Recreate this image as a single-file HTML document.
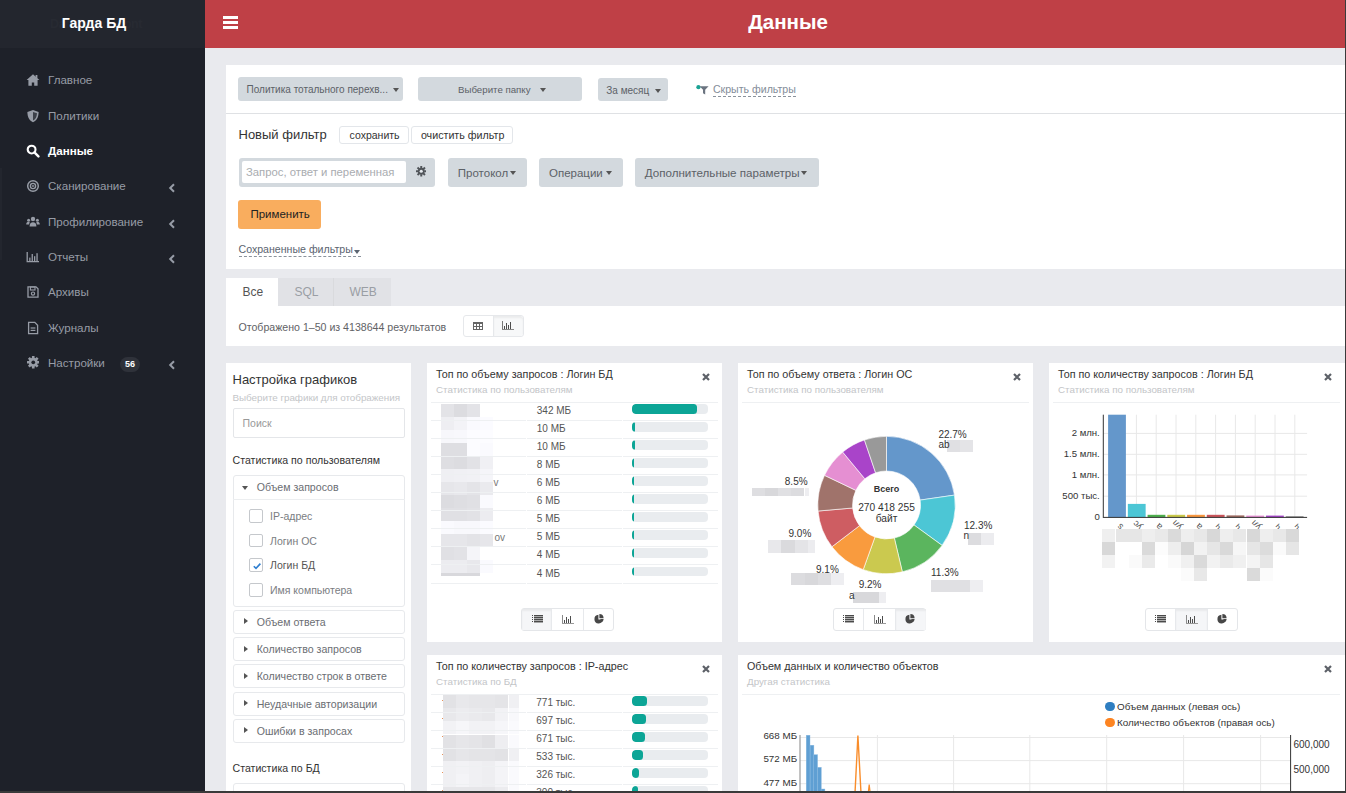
<!DOCTYPE html>
<html><head><meta charset="utf-8">
<style>
*{box-sizing:border-box;margin:0;padding:0}
html,body{width:1346px;height:793px;overflow:hidden;background:#e9eaee;font-family:"Liberation Sans",sans-serif;color:#333}
.abs{position:absolute}
#sb{left:0;top:0;width:205px;height:793px;background:#1e2129}
#logo{left:0;top:0;width:205px;height:48px;background:#23262e;color:#fff;font-weight:bold;font-size:14px;text-align:center;line-height:46px;padding-right:17px}
.nav{position:absolute;left:0;width:205px;height:20px;color:#979ca6;font-size:11.6px}
.nav .t{position:absolute;left:48px;top:0;line-height:20px}
.nav .ic{position:absolute}
.nav.act{color:#fff;font-weight:bold}
.chev{position:absolute;left:168px;top:7px;width:8px;height:10px}
#hdr{left:205px;top:0;width:1140px;height:48px;background:#bf4046}
#hdr .title{position:absolute;left:0;width:1166px;top:10px;text-align:center;color:#fff;font-weight:bold;font-size:20.5px}
#rb{left:1345px;top:0;width:1px;height:793px;background:#3a3a3a}
#bb{left:0;top:791px;width:1346px;height:2px;background:#3a3a3a}
.card{position:absolute;background:#fff}
.gbtn{position:absolute;background:#d3d9de;border-radius:3px;color:#5c6167;font-size:10px;height:24px;line-height:24px}
.caret{display:inline-block;width:0;height:0;border-left:3.5px solid transparent;border-right:3.5px solid transparent;border-top:4px solid #555;vertical-align:middle}
.gbtn .lbl,.wbtn .lbl{position:absolute;top:0;white-space:nowrap}
.gbtn .lbl{top:1px}
.gbtn .caret{position:absolute;top:10.5px}
.gbtn.big{font-size:11.5px;line-height:28.5px}
.gbtn.big .caret{top:12.5px}
.wbtn{position:absolute;background:#fff;border:1px solid #e3e6ea;border-radius:3px;color:#333;font-size:10.5px;line-height:16.5px}
.wbtn .lbl{left:8px}
.lnk{line-height:13px;border-bottom:1px dashed #8a929c;white-space:nowrap}
.acc{position:absolute;left:232.5px;width:172px;border:1px solid #e7e9ec;border-radius:3px;background:#fff}
.alb{left:256.7px;line-height:14px;font-size:10.6px;color:#6b6e73;white-space:nowrap}
.chk{left:249.2px;width:13.7px;height:13.7px;border:1px solid #c5c8cc;border-radius:2px;background:#fff}
.caretr{display:block;width:0;height:0;border-top:3.5px solid transparent;border-bottom:3.5px solid transparent;border-left:4px solid #555}
.ctitle{position:absolute;font-size:10.75px;line-height:13px;color:#333;white-space:nowrap}
.csub{position:absolute;font-size:9.8px;line-height:12px;color:#c3c5c8;white-space:nowrap}
.tval{position:absolute;font-size:10px;line-height:14px;color:#555;white-space:nowrap}
.track{position:absolute;width:75.7px;height:9.8px;border-radius:4px;background:#e9ecef;overflow:hidden}
.fill{height:100%;background:#0ca596;border-radius:3.5px}
.dlab{position:absolute;font-size:10px;line-height:12px;color:#333;white-space:nowrap}
.ylab{position:absolute;font-size:9.6px;line-height:12px;color:#333;text-align:right;white-space:nowrap}
</style></head><body>
<div id="sb" class="abs"></div>
<div id="logo" class="abs"><span style="position:absolute;left:50px;top:1px;color:#272a32;font-size:12.5px;letter-spacing:-0.5px">DataGuard Front</span><span style="position:relative">Гарда БД</span></div>
<div class="abs" style="left:0;top:168px;width:1.5px;height:92px;background:#23262e"></div>
<div class="nav" style="top:70.4px"><svg class="ic" style="left:26px;top:3px;color:#979ca6;fill:#979ca6" width="14" height="14" viewBox="0 0 14 14"><path d="M7 1.2 L13.4 7 L11.6 7 L11.6 12.8 L8.2 12.8 L8.2 9.4 L5.8 9.4 L5.8 12.8 L2.4 12.8 L2.4 7 L0.6 7 Z" /><rect x="9.6" y="2" width="1.8" height="3.4"/></svg><span class="t">Главное</span></div>
<div class="nav" style="top:105.7px"><svg class="ic" style="left:26px;top:3px;color:#979ca6;fill:#979ca6" width="14" height="14" viewBox="0 0 14 14"><path d="M7 1 L12.6 3 C12.6 8.5 10.5 11.6 7 13.2 C3.5 11.6 1.4 8.5 1.4 3 Z"/><path d="M7 2.9 L11 4.3 C10.8 8.2 9.4 10.4 7 11.5 Z" fill="#1e2129" opacity="0.75"/></svg><span class="t">Политики</span></div>
<div class="nav act" style="top:141.0px"><svg class="ic" style="left:26px;top:3px;color:#ffffff;fill:#ffffff" width="14" height="14" viewBox="0 0 14 14"><circle cx="5.6" cy="5.6" r="3.9" fill="none" stroke-width="2.1" stroke="currentColor"/><path d="M8.4 8.4 L12.4 12.4" stroke="currentColor" stroke-width="2.4" stroke-linecap="round"/></svg><span class="t">Данные</span></div>
<div class="nav" style="top:176.3px"><svg class="ic" style="left:26px;top:3px;color:#979ca6;fill:#979ca6" width="14" height="14" viewBox="0 0 14 14"><circle cx="7" cy="7" r="5.3" fill="none" stroke="currentColor" stroke-width="1.5"/><circle cx="7" cy="7" r="2.6" fill="none" stroke="currentColor" stroke-width="1.4"/><circle cx="7" cy="7" r="0.9"/></svg><span class="t">Сканирование</span><svg class="chev" width="8" height="10" viewBox="0 0 8 10"><path d="M6 1.2 L2.2 5 L6 8.8" fill="none" stroke="#979ca6" stroke-width="2"/></svg></div>
<div class="nav" style="top:211.6px"><svg class="ic" style="left:26px;top:3px;color:#979ca6;fill:#979ca6" width="14" height="14" viewBox="0 0 14 14"><circle cx="7" cy="4" r="2.2"/><path d="M3.6 11.6 C3.6 8.4 4.8 7.2 7 7.2 C9.2 7.2 10.4 8.4 10.4 11.6 Z"/><circle cx="2.6" cy="5.2" r="1.5"/><circle cx="11.4" cy="5.2" r="1.5"/><path d="M0.2 9.4 C0.2 7.6 1 7 2.6 7 C3.4 7 3.6 7.3 3.9 7.6 C3.4 8.2 3.1 8.8 3 9.4Z"/><path d="M13.8 9.4 C13.8 7.6 13 7 11.4 7 C10.6 7 10.4 7.3 10.1 7.6 C10.6 8.2 10.9 8.8 11 9.4Z"/></svg><span class="t">Профилирование</span><svg class="chev" width="8" height="10" viewBox="0 0 8 10"><path d="M6 1.2 L2.2 5 L6 8.8" fill="none" stroke="#979ca6" stroke-width="2"/></svg></div>
<div class="nav" style="top:246.9px"><svg class="ic" style="left:26px;top:3px;color:#979ca6;fill:#979ca6" width="14" height="14" viewBox="0 0 14 14"><path d="M1.2 2 L1.2 11.6 L13 11.6" fill="none" stroke="currentColor" stroke-width="1.3"/><rect x="3.2" y="7.6" width="1.3" height="3.4"/><rect x="5.6" y="4" width="1.3" height="7"/><rect x="8" y="6.2" width="1.3" height="4.8"/><rect x="10.4" y="3.2" width="1.3" height="7.8"/></svg><span class="t">Отчеты</span><svg class="chev" width="8" height="10" viewBox="0 0 8 10"><path d="M6 1.2 L2.2 5 L6 8.8" fill="none" stroke="#979ca6" stroke-width="2"/></svg></div>
<div class="nav" style="top:282.2px"><svg class="ic" style="left:26px;top:3px;color:#979ca6;fill:#979ca6" width="14" height="14" viewBox="0 0 14 14"><path d="M2 1.8 L10 1.8 L12 3.8 L12 12.2 L2 12.2 Z" fill="none" stroke="currentColor" stroke-width="1.3"/><rect x="4.4" y="2" width="4.6" height="3" fill="none" stroke="currentColor" stroke-width="1.1"/><circle cx="7" cy="8.6" r="1.6" fill="none" stroke="currentColor" stroke-width="1.2"/></svg><span class="t">Архивы</span></div>
<div class="nav" style="top:317.5px"><svg class="ic" style="left:26px;top:3px;color:#979ca6;fill:#979ca6" width="14" height="14" viewBox="0 0 14 14"><path d="M2.6 1.4 L8.8 1.4 L11.6 4.2 L11.6 12.6 L2.6 12.6 Z" fill="none" stroke="currentColor" stroke-width="1.3"/><rect x="4.6" y="6.4" width="4.8" height="1.2"/><rect x="4.6" y="8.8" width="4.8" height="1.2"/></svg><span class="t">Журналы</span></div>
<div class="nav" style="top:352.8px"><svg class="ic" style="left:26.5px;top:3.5px;color:#979ca6;fill:#979ca6" width="12.5" height="12.5" viewBox="0 0 14 14"><g transform="translate(7 7)"><rect x="-1.5" y="-7" width="3" height="3.2" rx="0.4" transform="rotate(0)"/><rect x="-1.5" y="-7" width="3" height="3.2" rx="0.4" transform="rotate(45)"/><rect x="-1.5" y="-7" width="3" height="3.2" rx="0.4" transform="rotate(90)"/><rect x="-1.5" y="-7" width="3" height="3.2" rx="0.4" transform="rotate(135)"/><rect x="-1.5" y="-7" width="3" height="3.2" rx="0.4" transform="rotate(180)"/><rect x="-1.5" y="-7" width="3" height="3.2" rx="0.4" transform="rotate(225)"/><rect x="-1.5" y="-7" width="3" height="3.2" rx="0.4" transform="rotate(270)"/><rect x="-1.5" y="-7" width="3" height="3.2" rx="0.4" transform="rotate(315)"/><circle r="5"/></g><circle cx="7" cy="7" r="2.1" fill="#1e2129"/></svg><span class="t">Настройки</span><svg class="chev" width="8" height="10" viewBox="0 0 8 10"><path d="M6 1.2 L2.2 5 L6 8.8" fill="none" stroke="#979ca6" stroke-width="2"/></svg><span style="position:absolute;left:120px;top:4px;width:20px;height:15px;border-radius:8px;background:#2f323a;color:#fff;font-weight:bold;font-size:9px;line-height:15px;text-align:center">56</span></div>

<div id="hdr" class="abs">
  <svg style="position:absolute;left:18px;top:16px" width="15" height="13" viewBox="0 0 15 13"><rect x="0" y="0" width="15" height="3" fill="#fff"/><rect x="0" y="5" width="15" height="3" fill="#fff"/><rect x="0" y="10" width="15" height="3" fill="#fff"/></svg>
  <div class="title">Данные</div>
</div>

<!-- filter card -->
<div class="card" style="left:226px;top:65px;width:1119px;height:204px"></div>


<!-- filter content -->
<div class="gbtn" style="left:238px;top:77px;width:165px;height:24px"><span class="lbl" style="left:8.6px">Политика тотального перехв...</span><i class="caret" style="left:155px"></i></div>
<div class="gbtn" style="left:418px;top:77px;width:164px;height:24px"><span class="lbl" style="left:40px;font-size:9.7px">Выберите папку</span><i class="caret" style="left:122px"></i></div>
<div class="gbtn" style="left:598px;top:78px;width:70px;height:23px"><span class="lbl" style="left:8.3px">За месяц</span><i class="caret" style="left:57px"></i></div>
<svg class="abs" style="left:696px;top:84.5px" width="14" height="10" viewBox="0 0 14 10"><circle cx="2.4" cy="2.2" r="2.1" fill="#1aa394"/><path d="M3.6 1.2 L12.6 1.2 L9.2 4.8 L9.2 9.4 L7 8.2 L7 4.8 Z" fill="#6b7480"/></svg>
<div class="abs lnk" style="left:712.9px;top:82.5px;font-size:10.6px;color:#848d99">Скрыть фильтры</div>
<div class="abs" style="left:226px;top:112.5px;width:1119px;height:1px;background:#dfe1e4"></div>

<div class="abs" style="left:238.5px;top:127px;font-size:13px;line-height:16px;color:#333">Новый фильтр</div>
<div class="wbtn" style="left:339px;top:125.5px;width:69.5px;height:18.5px"><span class="lbl" style="left:9.6px">сохранить</span></div>
<div class="wbtn" style="left:411px;top:125.5px;width:101.6px;height:18.5px"><span class="lbl" style="left:8.9px;font-size:10.7px">очистить фильтр</span></div>

<div class="gbtn" style="left:238.5px;top:158px;width:196.5px;height:28.5px"></div>
<div class="abs" style="left:242.3px;top:161px;width:163.7px;height:22.4px;background:#fff;border-radius:2px"></div>
<div class="abs" style="left:246px;top:161px;line-height:22.4px;font-size:11.3px;color:#a9acb0">Запрос, ответ и переменная</div>
<svg class="abs" style="left:415.5px;top:166px" width="10.5" height="10.5" viewBox="0 0 14 14"><g transform="translate(7 7)" fill="#505459"><rect x="-1.3" y="-7" width="2.6" height="3" transform="rotate(0)"/><rect x="-1.3" y="-7" width="2.6" height="3" transform="rotate(45)"/><rect x="-1.3" y="-7" width="2.6" height="3" transform="rotate(90)"/><rect x="-1.3" y="-7" width="2.6" height="3" transform="rotate(135)"/><rect x="-1.3" y="-7" width="2.6" height="3" transform="rotate(180)"/><rect x="-1.3" y="-7" width="2.6" height="3" transform="rotate(225)"/><rect x="-1.3" y="-7" width="2.6" height="3" transform="rotate(270)"/><rect x="-1.3" y="-7" width="2.6" height="3" transform="rotate(315)"/><circle r="4.6"/></g><circle cx="7" cy="7" r="2.1" fill="#e6eaee"/></svg>
<div class="gbtn big" style="left:448px;top:158px;width:79px;height:28.5px"><span class="lbl" style="left:9.8px">Протокол</span><i class="caret" style="left:62px"></i></div>
<div class="gbtn big" style="left:539px;top:158px;width:84px;height:28.5px"><span class="lbl" style="left:10px">Операции</span><i class="caret" style="left:67px"></i></div>
<div class="gbtn big" style="left:635px;top:158px;width:184px;height:28.5px"><span class="lbl" style="left:9.8px;font-size:11.6px">Дополнительные параметры</span><i class="caret" style="left:166px"></i></div>

<div class="abs" style="left:238px;top:199.5px;width:82.5px;height:29.3px;background:#f9ad5e;border-radius:3px"></div>
<div class="abs" style="left:250.4px;top:199.5px;line-height:29.3px;font-size:11.5px;color:#222">Применить</div>

<div class="abs lnk" style="left:238.5px;top:242.5px;font-size:10.6px;color:#5b6470;padding-right:8px">Сохраненные фильтры<i class="caret" style="position:absolute;left:115px;top:7px;border-top-color:#5b6470"></i></div>

<!-- tabs -->
<div class="abs" style="left:226px;top:278px;width:52px;height:28px;background:#fff"></div>
<div class="abs" style="left:278px;top:278px;width:55px;height:28px;background:#e1e2e6"></div>
<div class="abs" style="left:333px;top:278px;width:58px;height:28px;background:#e1e2e6;border-left:1px solid #d9dadd"></div>
<div class="card" style="left:226px;top:306px;width:1119px;height:40px"></div>
<div class="abs" style="left:242.5px;top:278px;line-height:28px;font-size:12px;color:#555">Все</div>
<div class="abs" style="left:294.5px;top:278px;line-height:28px;font-size:12px;color:#9a9ea4">SQL</div>
<div class="abs" style="left:349.5px;top:278px;line-height:28px;font-size:12px;color:#9a9ea4">WEB</div>
<div class="abs" style="left:238.5px;top:317px;line-height:20px;font-size:10.6px;color:#5f6266">Отображено 1–50 из 4138644 результатов</div>
<div class="abs" style="left:463.3px;top:314.7px;width:60.3px;height:22.8px;border:1px solid #e6e8eb;border-radius:3px;background:#fff"></div>
<div class="abs" style="left:492.6px;top:315.7px;width:30px;height:20.8px;background:#f7f8f9;border-left:1px solid #e6e8eb;border-radius:0 3px 3px 0;box-shadow:inset 0 2px 2px rgba(0,0,0,0.05)"></div>
<svg class="abs" style="left:473px;top:322px" width="10" height="8" viewBox="0 0 10 8" shape-rendering="crispEdges"><g fill="#666"><rect x="0" y="0" width="10" height="2"/><rect x="0" y="0" width="1" height="8"/><rect x="9" y="0" width="1" height="8"/><rect x="0" y="7" width="10" height="1"/><rect x="0" y="4" width="10" height="1"/><rect x="3" y="0" width="1" height="8"/><rect x="6" y="0" width="1" height="8"/></g></svg>
<svg class="abs" style="left:502px;top:321px" width="12" height="9" viewBox="0 0 12 9" shape-rendering="crispEdges"><rect x="0" y="0" width="1" height="9" fill="#777"/><rect x="0" y="8" width="12" height="1" fill="#888"/><g fill="#4d4d4d"><rect x="2" y="5" width="1" height="3"/><rect x="4" y="2" width="1" height="6"/><rect x="6" y="4" width="1" height="4"/><rect x="8" y="1" width="1" height="7"/></g></svg>


<!-- left panel -->
<div class="card" style="left:226px;top:363px;width:185px;height:430px"></div>
<div class="abs" style="left:232.5px;top:372px;font-size:13px;line-height:16px;color:#333">Настройка графиков</div>
<div class="abs" style="left:232.5px;top:391px;font-size:9.9px;line-height:13px;color:#c4c6c9;letter-spacing:-0.05px">Выберите графики для отображения</div>
<div class="abs" style="left:232.5px;top:408.4px;width:172px;height:30px;border:1px solid #e4e6e9;border-radius:2px"></div>
<div class="abs" style="left:242.5px;top:408.4px;line-height:30px;font-size:10.5px;color:#999">Поиск</div>
<div class="abs" style="left:232.5px;top:453px;font-size:10.6px;line-height:14px;color:#333">Статистика по пользователям</div>
<div class="acc" style="top:475.4px;height:132px"></div>
<div class="abs" style="left:232.5px;top:499px;width:172px;height:1px;background:#eceef0"></div>
<i class="caret abs" style="left:242px;top:485.5px;border-top-color:#555"></i>
<div class="abs alb" style="top:480px">Объем запросов</div>
<div class="abs chk" style="top:509.2px"></div><div class="abs" style="left:270px;top:509.0px;line-height:14px;font-size:10.5px;color:#7a7d82">IP-адрес</div>
<div class="abs chk" style="top:533.8px"></div><div class="abs" style="left:270px;top:533.6px;line-height:14px;font-size:10.5px;color:#7a7d82">Логин ОС</div>
<div class="abs chk" style="top:558.4px"><svg style="position:absolute;left:2px;top:2px" width="10" height="10" viewBox="0 0 10 10"><path d="M1.8 5.2 L4 7.4 L8.4 2.6" fill="none" stroke="#2f7fd0" stroke-width="1.6"/></svg></div><div class="abs" style="left:270px;top:558.2px;line-height:14px;font-size:10.5px;color:#555">Логин БД</div>
<div class="abs chk" style="top:583.0px"></div><div class="abs" style="left:270px;top:582.8px;line-height:14px;font-size:10.5px;color:#7a7d82">Имя компьютера</div>
<div class="acc" style="top:609.8px;height:24px"></div><i class="caretr abs" style="left:244px;top:618.3px"></i><div class="abs alb" style="top:614.8px">Объем ответа</div>
<div class="acc" style="top:637.3px;height:24px"></div><i class="caretr abs" style="left:244px;top:645.8px"></i><div class="abs alb" style="top:642.3px">Количество запросов</div>
<div class="acc" style="top:664.2px;height:24px"></div><i class="caretr abs" style="left:244px;top:672.7px"></i><div class="abs alb" style="top:669.2px">Количество строк в ответе</div>
<div class="acc" style="top:691.5px;height:24px"></div><i class="caretr abs" style="left:244px;top:700.0px"></i><div class="abs alb" style="top:696.5px">Неудачные авторизации</div>
<div class="acc" style="top:718.5px;height:24px"></div><i class="caretr abs" style="left:244px;top:727.0px"></i><div class="abs alb" style="top:723.5px">Ошибки в запросах</div>
<div class="abs" style="left:232.5px;top:760.5px;font-size:10.6px;line-height:14px;color:#333">Статистика по БД</div>
<div class="acc" style="top:782.8px;height:24px"></div><div class="abs alb" style="top:787.8px">Количество</div>


<!-- chart cards -->
<div class="card" style="left:427px;top:363px;width:295px;height:279px"></div>
<div class="card" style="left:738px;top:363px;width:295px;height:279px"></div>
<div class="card" style="left:1049px;top:363px;width:296px;height:279px"></div>
<div class="card" style="left:427px;top:655px;width:295px;height:138px"></div>
<div class="card" style="left:738px;top:655px;width:607px;height:138px"></div>

<!-- CARDS -->
<div class="ctitle" style="left:436px;top:368px">Топ по объему запросов : Логин БД</div>
<div class="csub" style="left:436px;top:383.5px">Статистика по пользователям</div>
<svg class="abs" style="left:702px;top:373px" width="8" height="8" viewBox="0 0 8 8"><path d="M1 1 L7 7 M7 1 L1 7" stroke="#5d6168" stroke-width="2.2"/></svg>
<div class="abs" style="left:431px;top:401.5px;width:287px;height:1px;background:#eef0f2"></div>
<div class="abs" style="left:440.7px;top:403.5px;width:13px;height:13px;background:rgb(227,227,231)"></div>
<div class="abs" style="left:453.7px;top:403.5px;width:13px;height:13px;background:rgb(220,220,224)"></div>
<div class="abs" style="left:466.7px;top:403.5px;width:13px;height:13px;background:rgb(227,227,231)"></div>
<div class="abs" style="left:479.7px;top:403.5px;width:13px;height:13px;background:rgb(255,255,255)"></div>
<div class="abs" style="left:440.7px;top:416.5px;width:13px;height:13px;background:rgb(238,238,242)"></div>
<div class="abs" style="left:453.7px;top:416.5px;width:13px;height:13px;background:rgb(243,243,247)"></div>
<div class="abs" style="left:466.7px;top:416.5px;width:13px;height:13px;background:rgb(250,250,254)"></div>
<div class="abs" style="left:479.7px;top:416.5px;width:13px;height:13px;background:rgb(251,251,255)"></div>
<div class="abs" style="left:440.7px;top:429.5px;width:13px;height:13px;background:rgb(247,247,251)"></div>
<div class="abs" style="left:453.7px;top:429.5px;width:13px;height:13px;background:rgb(248,248,252)"></div>
<div class="abs" style="left:466.7px;top:429.5px;width:13px;height:13px;background:rgb(252,252,255)"></div>
<div class="abs" style="left:479.7px;top:429.5px;width:13px;height:13px;background:rgb(252,252,255)"></div>
<div class="abs" style="left:440.7px;top:442.5px;width:13px;height:13px;background:rgb(222,222,226)"></div>
<div class="abs" style="left:453.7px;top:442.5px;width:13px;height:13px;background:rgb(222,222,226)"></div>
<div class="abs" style="left:466.7px;top:442.5px;width:13px;height:13px;background:rgb(252,252,255)"></div>
<div class="abs" style="left:479.7px;top:442.5px;width:13px;height:13px;background:rgb(250,250,254)"></div>
<div class="abs" style="left:440.7px;top:455.5px;width:13px;height:13px;background:rgb(222,222,226)"></div>
<div class="abs" style="left:453.7px;top:455.5px;width:13px;height:13px;background:rgb(220,220,224)"></div>
<div class="abs" style="left:466.7px;top:455.5px;width:13px;height:13px;background:rgb(226,226,230)"></div>
<div class="abs" style="left:479.7px;top:455.5px;width:13px;height:13px;background:rgb(240,240,244)"></div>
<div class="abs" style="left:440.7px;top:468.5px;width:13px;height:13px;background:rgb(239,239,243)"></div>
<div class="abs" style="left:453.7px;top:468.5px;width:13px;height:13px;background:rgb(240,240,244)"></div>
<div class="abs" style="left:466.7px;top:468.5px;width:13px;height:13px;background:rgb(241,241,245)"></div>
<div class="abs" style="left:479.7px;top:468.5px;width:13px;height:13px;background:rgb(245,245,249)"></div>
<div class="abs" style="left:440.7px;top:481.5px;width:13px;height:13px;background:rgb(230,230,234)"></div>
<div class="abs" style="left:453.7px;top:481.5px;width:13px;height:13px;background:rgb(232,232,236)"></div>
<div class="abs" style="left:466.7px;top:481.5px;width:13px;height:13px;background:rgb(228,228,232)"></div>
<div class="abs" style="left:479.7px;top:481.5px;width:13px;height:13px;background:rgb(234,234,238)"></div>
<div class="abs" style="left:440.7px;top:494.5px;width:13px;height:13px;background:rgb(220,220,224)"></div>
<div class="abs" style="left:453.7px;top:494.5px;width:13px;height:13px;background:rgb(222,222,226)"></div>
<div class="abs" style="left:466.7px;top:494.5px;width:13px;height:13px;background:rgb(224,224,228)"></div>
<div class="abs" style="left:479.7px;top:494.5px;width:13px;height:13px;background:rgb(250,250,254)"></div>
<div class="abs" style="left:440.7px;top:507.5px;width:13px;height:13px;background:rgb(224,224,228)"></div>
<div class="abs" style="left:453.7px;top:507.5px;width:13px;height:13px;background:rgb(224,224,228)"></div>
<div class="abs" style="left:466.7px;top:507.5px;width:13px;height:13px;background:rgb(226,226,230)"></div>
<div class="abs" style="left:479.7px;top:507.5px;width:13px;height:13px;background:rgb(236,236,240)"></div>
<div class="abs" style="left:440.7px;top:520.5px;width:13px;height:13px;background:rgb(250,250,254)"></div>
<div class="abs" style="left:453.7px;top:520.5px;width:13px;height:13px;background:rgb(248,248,252)"></div>
<div class="abs" style="left:466.7px;top:520.5px;width:13px;height:13px;background:rgb(248,248,252)"></div>
<div class="abs" style="left:479.7px;top:520.5px;width:13px;height:13px;background:rgb(251,251,255)"></div>
<div class="abs" style="left:440.7px;top:533.5px;width:13px;height:13px;background:rgb(230,230,234)"></div>
<div class="abs" style="left:453.7px;top:533.5px;width:13px;height:13px;background:rgb(230,230,234)"></div>
<div class="abs" style="left:466.7px;top:533.5px;width:13px;height:13px;background:rgb(227,227,231)"></div>
<div class="abs" style="left:479.7px;top:533.5px;width:13px;height:13px;background:rgb(230,230,234)"></div>
<div class="abs" style="left:440.7px;top:546.5px;width:13px;height:13px;background:rgb(224,224,228)"></div>
<div class="abs" style="left:453.7px;top:546.5px;width:13px;height:13px;background:rgb(226,226,230)"></div>
<div class="abs" style="left:466.7px;top:546.5px;width:13px;height:13px;background:rgb(245,245,249)"></div>
<div class="abs" style="left:479.7px;top:546.5px;width:13px;height:13px;background:rgb(255,255,255)"></div>
<div class="abs" style="left:440.7px;top:559.5px;width:13px;height:13px;background:rgb(236,236,240)"></div>
<div class="abs" style="left:453.7px;top:559.5px;width:13px;height:13px;background:rgb(236,236,240)"></div>
<div class="abs" style="left:466.7px;top:559.5px;width:13px;height:13px;background:rgb(232,232,236)"></div>
<div class="abs" style="left:479.7px;top:559.5px;width:13px;height:13px;background:rgb(250,250,254)"></div>
<div class="abs" style="left:440.7px;top:572.5px;width:39px;height:3px;background:rgb(216,216,220)"></div>
<div class="tval" style="left:536.8px;top:404.0px">342 МБ</div>
<div class="track" style="left:632px;top:404.0px"><div class="fill" style="width:65px"></div></div>
<div class="abs" style="left:431px;top:420.05px;width:95px;height:1px;background:#eef0f2"></div>
<div class="abs" style="left:527px;top:420.05px;width:95px;height:1px;background:#eef0f2"></div>
<div class="abs" style="left:623px;top:420.05px;width:95px;height:1px;background:#eef0f2"></div>
<div class="tval" style="left:536.8px;top:422.1px">10 МБ</div>
<div class="track" style="left:632px;top:422.1px"><div class="fill" style="width:2.5px"></div></div>
<div class="abs" style="left:431px;top:438.1px;width:95px;height:1px;background:#eef0f2"></div>
<div class="abs" style="left:527px;top:438.1px;width:95px;height:1px;background:#eef0f2"></div>
<div class="abs" style="left:623px;top:438.1px;width:95px;height:1px;background:#eef0f2"></div>
<div class="tval" style="left:536.8px;top:440.1px">10 МБ</div>
<div class="track" style="left:632px;top:440.1px"><div class="fill" style="width:2.5px"></div></div>
<div class="abs" style="left:431px;top:456.15px;width:95px;height:1px;background:#eef0f2"></div>
<div class="abs" style="left:527px;top:456.15px;width:95px;height:1px;background:#eef0f2"></div>
<div class="abs" style="left:623px;top:456.15px;width:95px;height:1px;background:#eef0f2"></div>
<div class="tval" style="left:536.8px;top:458.1px">8 МБ</div>
<div class="track" style="left:632px;top:458.1px"><div class="fill" style="width:2.2px"></div></div>
<div class="abs" style="left:431px;top:474.2px;width:95px;height:1px;background:#eef0f2"></div>
<div class="abs" style="left:527px;top:474.2px;width:95px;height:1px;background:#eef0f2"></div>
<div class="abs" style="left:623px;top:474.2px;width:95px;height:1px;background:#eef0f2"></div>
<div class="tval" style="left:536.8px;top:476.2px">6 МБ</div>
<div class="track" style="left:632px;top:476.2px"><div class="fill" style="width:2px"></div></div>
<div class="abs" style="left:431px;top:492.25px;width:95px;height:1px;background:#eef0f2"></div>
<div class="abs" style="left:527px;top:492.25px;width:95px;height:1px;background:#eef0f2"></div>
<div class="abs" style="left:623px;top:492.25px;width:95px;height:1px;background:#eef0f2"></div>
<div class="tval" style="left:536.8px;top:494.2px">6 МБ</div>
<div class="track" style="left:632px;top:494.2px"><div class="fill" style="width:2px"></div></div>
<div class="abs" style="left:431px;top:510.3px;width:95px;height:1px;background:#eef0f2"></div>
<div class="abs" style="left:527px;top:510.3px;width:95px;height:1px;background:#eef0f2"></div>
<div class="abs" style="left:623px;top:510.3px;width:95px;height:1px;background:#eef0f2"></div>
<div class="tval" style="left:536.8px;top:512.3px">5 МБ</div>
<div class="track" style="left:632px;top:512.3px"><div class="fill" style="width:2px"></div></div>
<div class="abs" style="left:431px;top:528.35px;width:95px;height:1px;background:#eef0f2"></div>
<div class="abs" style="left:527px;top:528.35px;width:95px;height:1px;background:#eef0f2"></div>
<div class="abs" style="left:623px;top:528.35px;width:95px;height:1px;background:#eef0f2"></div>
<div class="tval" style="left:536.8px;top:530.4px">5 МБ</div>
<div class="track" style="left:632px;top:530.4px"><div class="fill" style="width:1.6px"></div></div>
<div class="abs" style="left:431px;top:546.4px;width:95px;height:1px;background:#eef0f2"></div>
<div class="abs" style="left:527px;top:546.4px;width:95px;height:1px;background:#eef0f2"></div>
<div class="abs" style="left:623px;top:546.4px;width:95px;height:1px;background:#eef0f2"></div>
<div class="tval" style="left:536.8px;top:548.4px">4 МБ</div>
<div class="track" style="left:632px;top:548.4px"><div class="fill" style="width:1.5px"></div></div>
<div class="abs" style="left:431px;top:564.45px;width:95px;height:1px;background:#eef0f2"></div>
<div class="abs" style="left:527px;top:564.45px;width:95px;height:1px;background:#eef0f2"></div>
<div class="abs" style="left:623px;top:564.45px;width:95px;height:1px;background:#eef0f2"></div>
<div class="tval" style="left:536.8px;top:566.5px">4 МБ</div>
<div class="track" style="left:632px;top:566.5px"><div class="fill" style="width:1.5px"></div></div>
<div class="abs" style="left:431px;top:582.5px;width:95px;height:1px;background:#eef0f2"></div>
<div class="abs" style="left:527px;top:582.5px;width:95px;height:1px;background:#eef0f2"></div>
<div class="abs" style="left:623px;top:582.5px;width:95px;height:1px;background:#eef0f2"></div>
<div class="tval" style="left:493.5px;top:476.4px;color:#777">v</div>
<div class="tval" style="left:494.5px;top:530.5px;color:#777">ov</div>
<div class="abs" style="left:521.3px;top:608px;width:93px;height:22.5px;border:1px solid #e4e6e9;border-radius:3px;background:#fff"></div>
<div class="abs" style="left:522.3px;top:609px;width:29.1px;height:20.5px;background:#f5f6f8;box-shadow:inset 0 2px 2px rgba(0,0,0,0.05)"></div>
<div class="abs" style="left:551.4px;top:609px;width:1px;height:20.5px;background:#e7e9ec"></div>
<div class="abs" style="left:583.2px;top:609px;width:1px;height:20.5px;background:#e7e9ec"></div>
<svg class="abs" style="left:532.0px;top:615.0px" width="11" height="8" viewBox="0 0 11 8"><g fill="#4a4a4a" shape-rendering="crispEdges"><rect x="0" y="0" width="1" height="1"/><rect x="2" y="0" width="8.5" height="1"/><rect x="0" y="2" width="1" height="1"/><rect x="2" y="2" width="8.5" height="1"/><rect x="0" y="4" width="1" height="1"/><rect x="2" y="4" width="8.5" height="1"/><rect x="0" y="6" width="1" height="1"/><rect x="2" y="6" width="8.5" height="1"/></g><g fill="#4a4a4a" opacity="0.45" shape-rendering="crispEdges"><rect x="2" y="1" width="8.5" height="1"/><rect x="2" y="3" width="8.5" height="1"/><rect x="2" y="5" width="8.5" height="1"/><rect x="2" y="7" width="8.5" height="1"/></g></svg>
<svg class="abs" style="left:562.0px;top:615.0px" width="12" height="9" viewBox="0 0 12 9"><g shape-rendering="crispEdges"><rect x="0" y="0" width="1" height="9" fill="#8a8a8a"/><rect x="0" y="8" width="11.5" height="1" fill="#9a9a9a"/><g fill="#4d4d4d"><rect x="2" y="5" width="1" height="3"/><rect x="4" y="2" width="1" height="6"/><rect x="6" y="4" width="1" height="4"/><rect x="8" y="1" width="1" height="7"/></g></g></svg>
<svg class="abs" style="left:593.8px;top:613.7px" width="10" height="10" viewBox="0 0 10 10"><path d="M4.4 0.8 A4.3 4.3 0 1 0 9 5.6 L4.4 5.6 Z" fill="#474747"/><path d="M5.4 0 A4.3 4.3 0 0 1 9.6 4.2 L5.4 4.2 Z" fill="#474747"/><path d="M6 5 L9.6 5 A4.3 4.3 0 0 1 8.4 7.8 Z" fill="#474747"/></svg>
<div class="ctitle" style="left:747px;top:368px">Топ по объему ответа : Логин ОС</div>
<div class="csub" style="left:747px;top:383.5px">Статистика по пользователям</div>
<svg class="abs" style="left:1013px;top:373px" width="8" height="8" viewBox="0 0 8 8"><path d="M1 1 L7 7 M7 1 L1 7" stroke="#5d6168" stroke-width="2.2"/></svg>
<div class="abs" style="left:742px;top:401.5px;width:287px;height:1px;background:#eef0f2"></div>
<svg class="abs" style="left:738px;top:363px" width="295" height="279"><path d="M148.50 73.30 A68.7 68.7 0 0 1 216.48 132.11 L182.15 137.10 A34 34 0 0 0 148.50 108.00 Z" fill="#6497cb" stroke="#fff" stroke-width="0.6"/><path d="M216.48 132.11 A68.7 68.7 0 0 1 204.08 182.38 L176.01 161.98 A34 34 0 0 0 182.15 137.10 Z" fill="#4cc6d5" stroke="#fff" stroke-width="0.6"/><path d="M204.08 182.38 A68.7 68.7 0 0 1 164.33 208.85 L156.33 175.09 A34 34 0 0 0 176.01 161.98 Z" fill="#5bb55e" stroke="#fff" stroke-width="0.6"/><path d="M164.33 208.85 A68.7 68.7 0 0 1 125.23 206.64 L136.98 173.99 A34 34 0 0 0 156.33 175.09 Z" fill="#cbc94f" stroke="#fff" stroke-width="0.6"/><path d="M125.23 206.64 A68.7 68.7 0 0 1 93.95 183.76 L121.50 162.67 A34 34 0 0 0 136.98 173.99 Z" fill="#f99b3e" stroke="#fff" stroke-width="0.6"/><path d="M93.95 183.76 A68.7 68.7 0 0 1 80.07 148.04 L114.63 144.99 A34 34 0 0 0 121.50 162.67 Z" fill="#ce5d62" stroke="#fff" stroke-width="0.6"/><path d="M80.07 148.04 A68.7 68.7 0 0 1 86.52 112.36 L117.83 127.33 A34 34 0 0 0 114.63 144.99 Z" fill="#a0736b" stroke="#fff" stroke-width="0.6"/><path d="M86.52 112.36 A68.7 68.7 0 0 1 104.71 89.07 L126.83 115.80 A34 34 0 0 0 117.83 127.33 Z" fill="#e58fd2" stroke="#fff" stroke-width="0.6"/><path d="M104.71 89.07 A68.7 68.7 0 0 1 126.45 76.93 L137.59 109.80 A34 34 0 0 0 126.83 115.80 Z" fill="#a944c9" stroke="#fff" stroke-width="0.6"/><path d="M126.45 76.93 A68.7 68.7 0 0 1 148.50 73.30 L148.50 108.00 A34 34 0 0 0 137.59 109.80 Z" fill="#999999" stroke="#fff" stroke-width="0.6"/></svg>
<div class="abs" style="left:846.5px;top:483px;width:80px;text-align:center;font-size:9px;font-weight:bold;color:#333;line-height:12px">Всего</div>
<div class="abs" style="left:846.5px;top:502px;width:80px;text-align:center;font-size:10.2px;color:#333;line-height:12px">270 418 255</div>
<div class="abs" style="left:846.5px;top:513px;width:80px;text-align:center;font-size:10.2px;color:#333;line-height:12px">байт</div>
<div class="dlab" style="left:938.4px;top:428.5px">22.7%</div>
<div class="dlab" style="left:964px;top:519.5px">12.3%</div>
<div class="dlab" style="left:931px;top:566.5px">11.3%</div>
<div class="dlab" style="left:858.7px;top:579px">9.2%</div>
<div class="dlab" style="left:816px;top:564px">9.1%</div>
<div class="dlab" style="left:788.5px;top:528px">9.0%</div>
<div class="dlab" style="left:784.8px;top:476px">8.5%</div>
<div class="abs" style="left:947.0px;top:440.4px;width:13px;height:12px;background:rgb(224,224,227)"></div>
<div class="abs" style="left:960.0px;top:440.4px;width:12.6px;height:12px;background:rgb(228,228,231)"></div>
<div class="abs" style="left:751.7px;top:487.6px;width:13.2px;height:8.6px;background:rgb(222,222,225)"></div>
<div class="abs" style="left:764.9px;top:487.6px;width:13.2px;height:8.6px;background:rgb(216,216,219)"></div>
<div class="abs" style="left:778.1px;top:487.6px;width:13.2px;height:8.6px;background:rgb(224,224,227)"></div>
<div class="abs" style="left:791.3px;top:487.6px;width:13.2px;height:8.6px;background:rgb(220,220,223)"></div>
<div class="abs" style="left:804.5px;top:487.6px;width:4.8px;height:8.6px;background:rgb(238,238,241)"></div>
<div class="abs" style="left:768.2px;top:540.3px;width:13.2px;height:12.7px;background:rgb(232,232,235)"></div>
<div class="abs" style="left:781.4px;top:540.3px;width:13.2px;height:12.7px;background:rgb(218,218,221)"></div>
<div class="abs" style="left:794.6px;top:540.3px;width:13.2px;height:12.7px;background:rgb(228,228,231)"></div>
<div class="abs" style="left:807.8px;top:540.3px;width:7.2px;height:12.7px;background:rgb(236,236,239)"></div>
<div class="abs" style="left:791.2px;top:572.6px;width:13.6px;height:12.7px;background:rgb(220,220,223)"></div>
<div class="abs" style="left:804.8px;top:572.6px;width:13.2px;height:12.7px;background:rgb(216,216,219)"></div>
<div class="abs" style="left:818.0px;top:572.6px;width:13.2px;height:12.7px;background:rgb(222,222,225)"></div>
<div class="abs" style="left:831.2px;top:572.6px;width:12.7px;height:12.7px;background:rgb(238,238,241)"></div>
<div class="abs" style="left:852.8px;top:591.8px;width:25.9px;height:11px;background:rgb(216,216,219)"></div>
<div class="abs" style="left:878.7px;top:591.8px;width:7.7px;height:11px;background:rgb(238,238,241)"></div>
<div class="abs" style="left:930.7px;top:580px;width:13.2px;height:12px;background:rgb(224,224,227)"></div>
<div class="abs" style="left:943.9px;top:580px;width:13.2px;height:12px;background:rgb(224,224,227)"></div>
<div class="abs" style="left:957.1px;top:580px;width:13.2px;height:12px;background:rgb(224,224,227)"></div>
<div class="abs" style="left:970.3px;top:580px;width:13.1px;height:12px;background:rgb(238,238,241)"></div>
<div class="abs" style="left:967.9px;top:532.6px;width:13px;height:12.4px;background:rgb(220,220,223)"></div>
<div class="abs" style="left:980.9px;top:532.6px;width:12.8px;height:12.4px;background:rgb(236,236,239)"></div>
<div class="dlab" style="left:938.4px;top:438.5px">ab</div>
<div class="dlab" style="left:963.5px;top:530px">n</div>
<div class="dlab" style="left:849px;top:590px">a</div>
<div class="abs" style="left:832.6px;top:608px;width:93px;height:22.5px;border:1px solid #e4e6e9;border-radius:3px;background:#fff"></div>
<div class="abs" style="left:862.7px;top:609px;width:1px;height:20.5px;background:#e7e9ec"></div>
<div class="abs" style="left:895.5px;top:609px;width:30.1px;height:20.5px;background:#f5f6f8;box-shadow:inset 0 2px 2px rgba(0,0,0,0.05)"></div>
<div class="abs" style="left:894.5px;top:609px;width:1px;height:20.5px;background:#e7e9ec"></div>
<svg class="abs" style="left:843.0px;top:615.0px" width="11" height="8" viewBox="0 0 11 8"><g fill="#4a4a4a" shape-rendering="crispEdges"><rect x="0" y="0" width="1" height="1"/><rect x="2" y="0" width="8.5" height="1"/><rect x="0" y="2" width="1" height="1"/><rect x="2" y="2" width="8.5" height="1"/><rect x="0" y="4" width="1" height="1"/><rect x="2" y="4" width="8.5" height="1"/><rect x="0" y="6" width="1" height="1"/><rect x="2" y="6" width="8.5" height="1"/></g><g fill="#4a4a4a" opacity="0.45" shape-rendering="crispEdges"><rect x="2" y="1" width="8.5" height="1"/><rect x="2" y="3" width="8.5" height="1"/><rect x="2" y="5" width="8.5" height="1"/><rect x="2" y="7" width="8.5" height="1"/></g></svg>
<svg class="abs" style="left:874.0px;top:615.0px" width="12" height="9" viewBox="0 0 12 9"><g shape-rendering="crispEdges"><rect x="0" y="0" width="1" height="9" fill="#8a8a8a"/><rect x="0" y="8" width="11.5" height="1" fill="#9a9a9a"/><g fill="#4d4d4d"><rect x="2" y="5" width="1" height="3"/><rect x="4" y="2" width="1" height="6"/><rect x="6" y="4" width="1" height="4"/><rect x="8" y="1" width="1" height="7"/></g></g></svg>
<svg class="abs" style="left:905.1px;top:613.7px" width="10" height="10" viewBox="0 0 10 10"><path d="M4.4 0.8 A4.3 4.3 0 1 0 9 5.6 L4.4 5.6 Z" fill="#474747"/><path d="M5.4 0 A4.3 4.3 0 0 1 9.6 4.2 L5.4 4.2 Z" fill="#474747"/><path d="M6 5 L9.6 5 A4.3 4.3 0 0 1 8.4 7.8 Z" fill="#474747"/></svg>
<div class="ctitle" style="left:1058px;top:368px">Топ по количеству запросов : Логин БД</div>
<div class="csub" style="left:1058px;top:383.5px">Статистика по пользователям</div>
<svg class="abs" style="left:1324px;top:373px" width="8" height="8" viewBox="0 0 8 8"><path d="M1 1 L7 7 M7 1 L1 7" stroke="#5d6168" stroke-width="2.2"/></svg>
<div class="abs" style="left:1053px;top:401.5px;width:287px;height:1px;background:#eef0f2"></div>
<svg class="abs" style="left:1049px;top:363px" width="296" height="279"><line x1="54.299999999999955" y1="70.39999999999998" x2="258.0999999999999" y2="70.39999999999998" stroke="#e8e8e8" stroke-width="1"/><line x1="54.299999999999955" y1="91.30000000000001" x2="258.0999999999999" y2="91.30000000000001" stroke="#e8e8e8" stroke-width="1"/><line x1="54.299999999999955" y1="111.89999999999998" x2="258.0999999999999" y2="111.89999999999998" stroke="#e8e8e8" stroke-width="1"/><line x1="54.299999999999955" y1="133.2" x2="258.0999999999999" y2="133.2" stroke="#e8e8e8" stroke-width="1"/><line x1="87.40000000000009" y1="51.69999999999999" x2="87.40000000000009" y2="154.39999999999998" stroke="#e8e8e8" stroke-width="1"/><line x1="107.20000000000005" y1="51.69999999999999" x2="107.20000000000005" y2="154.39999999999998" stroke="#e8e8e8" stroke-width="1"/><line x1="127" y1="51.69999999999999" x2="127" y2="154.39999999999998" stroke="#e8e8e8" stroke-width="1"/><line x1="146.79999999999995" y1="51.69999999999999" x2="146.79999999999995" y2="154.39999999999998" stroke="#e8e8e8" stroke-width="1"/><line x1="166.5999999999999" y1="51.69999999999999" x2="166.5999999999999" y2="154.39999999999998" stroke="#e8e8e8" stroke-width="1"/><line x1="186.4000000000001" y1="51.69999999999999" x2="186.4000000000001" y2="154.39999999999998" stroke="#e8e8e8" stroke-width="1"/><line x1="206.20000000000005" y1="51.69999999999999" x2="206.20000000000005" y2="154.39999999999998" stroke="#e8e8e8" stroke-width="1"/><line x1="226" y1="51.69999999999999" x2="226" y2="154.39999999999998" stroke="#e8e8e8" stroke-width="1"/><line x1="245.79999999999995" y1="51.69999999999999" x2="245.79999999999995" y2="154.39999999999998" stroke="#e8e8e8" stroke-width="1"/><rect x="59.10" y="51.70" width="17.8" height="102.70" fill="#6497cb"/><rect x="78.84" y="140.90" width="17.8" height="13.50" fill="#4cc6d5"/><rect x="98.58" y="151.80" width="17.8" height="2.60" fill="#4cae4c"/><rect x="118.32" y="151.80" width="17.8" height="2.60" fill="#c9c94a"/><rect x="138.06" y="151.80" width="17.8" height="2.60" fill="#f7963e"/><rect x="157.80" y="151.80" width="17.8" height="2.60" fill="#c9545a"/><rect x="177.54" y="152.40" width="17.8" height="2.00" fill="#9e6b61"/><rect x="197.28" y="152.60" width="17.8" height="1.80" fill="#e58fd3"/><rect x="217.02" y="152.60" width="17.8" height="1.80" fill="#a443c8"/><rect x="236.76" y="153.20" width="17.8" height="1.20" fill="#8a8a8a"/><line x1="54.299999999999955" y1="51.69999999999999" x2="54.299999999999955" y2="154.89999999999998" stroke="#333" stroke-width="1"/><line x1="54.299999999999955" y1="154.39999999999998" x2="258.0999999999999" y2="154.39999999999998" stroke="#333" stroke-width="1"/></svg>
<div class="ylab" style="left:1040px;top:427.4px;width:59.8px">2 млн.</div>
<div class="ylab" style="left:1040px;top:448.3px;width:59.8px">1.5 млн.</div>
<div class="ylab" style="left:1040px;top:468.9px;width:59.8px">1 млн.</div>
<div class="ylab" style="left:1040px;top:490.2px;width:59.8px">500 тыс.</div>
<div class="ylab" style="left:1040px;top:511.4px;width:59.8px">0</div>
<div class="abs" style="left:1117.6px;top:532px;font-size:9px;line-height:10px;color:#555;transform:rotate(-135deg);transform-origin:0 0;white-space:nowrap">s</div>
<div class="abs" style="left:1137.3px;top:532px;font-size:9px;line-height:10px;color:#555;transform:rotate(-135deg);transform-origin:0 0;white-space:nowrap">уc</div>
<div class="abs" style="left:1157.1px;top:532px;font-size:9px;line-height:10px;color:#555;transform:rotate(-135deg);transform-origin:0 0;white-space:nowrap">а</div>
<div class="abs" style="left:1176.8px;top:532px;font-size:9px;line-height:10px;color:#555;transform:rotate(-135deg);transform-origin:0 0;white-space:nowrap">ул</div>
<div class="abs" style="left:1196.6px;top:532px;font-size:9px;line-height:10px;color:#555;transform:rotate(-135deg);transform-origin:0 0;white-space:nowrap">а</div>
<div class="abs" style="left:1216.3px;top:532px;font-size:9px;line-height:10px;color:#555;transform:rotate(-135deg);transform-origin:0 0;white-space:nowrap">ч</div>
<div class="abs" style="left:1236.0px;top:532px;font-size:9px;line-height:10px;color:#555;transform:rotate(-135deg);transform-origin:0 0;white-space:nowrap">ч</div>
<div class="abs" style="left:1255.8px;top:532px;font-size:9px;line-height:10px;color:#555;transform:rotate(-135deg);transform-origin:0 0;white-space:nowrap">ул</div>
<div class="abs" style="left:1275.5px;top:532px;font-size:9px;line-height:10px;color:#555;transform:rotate(-135deg);transform-origin:0 0;white-space:nowrap">ч</div>
<div class="abs" style="left:1295.3px;top:532px;font-size:9px;line-height:10px;color:#555;transform:rotate(-135deg);transform-origin:0 0;white-space:nowrap">ч</div>
<div class="abs" style="left:1102.4px;top:528.8px;width:13.1px;height:13.1px;background:rgb(239,239,239)"></div>
<div class="abs" style="left:1115.5px;top:528.8px;width:13.1px;height:13.1px;background:rgb(230,230,230)"></div>
<div class="abs" style="left:1128.6px;top:528.8px;width:13.1px;height:13.1px;background:rgb(230,230,230)"></div>
<div class="abs" style="left:1141.7px;top:528.8px;width:13.1px;height:13.1px;background:rgb(238,238,238)"></div>
<div class="abs" style="left:1154.8px;top:528.8px;width:13.1px;height:13.1px;background:rgb(233,233,233)"></div>
<div class="abs" style="left:1167.9px;top:528.8px;width:13.1px;height:13.1px;background:rgb(218,218,218)"></div>
<div class="abs" style="left:1181.0px;top:528.8px;width:13.1px;height:13.1px;background:rgb(238,238,238)"></div>
<div class="abs" style="left:1194.1px;top:528.8px;width:13.1px;height:13.1px;background:rgb(232,232,232)"></div>
<div class="abs" style="left:1207.2px;top:528.8px;width:13.1px;height:13.1px;background:rgb(216,216,216)"></div>
<div class="abs" style="left:1220.3px;top:528.8px;width:13.1px;height:13.1px;background:rgb(238,238,238)"></div>
<div class="abs" style="left:1233.4px;top:528.8px;width:13.1px;height:13.1px;background:rgb(232,232,232)"></div>
<div class="abs" style="left:1246.5px;top:528.8px;width:13.1px;height:13.1px;background:rgb(216,216,216)"></div>
<div class="abs" style="left:1259.6px;top:528.8px;width:13.1px;height:13.1px;background:rgb(238,238,238)"></div>
<div class="abs" style="left:1272.7px;top:528.8px;width:13.1px;height:13.1px;background:rgb(232,232,232)"></div>
<div class="abs" style="left:1285.8px;top:528.8px;width:13.1px;height:13.1px;background:rgb(217,217,217)"></div>
<div class="abs" style="left:1102.4px;top:541.9px;width:13.1px;height:13.1px;background:rgb(216,216,216)"></div>
<div class="abs" style="left:1115.5px;top:541.9px;width:13.1px;height:13.1px;background:rgb(255,255,255)"></div>
<div class="abs" style="left:1128.6px;top:541.9px;width:13.1px;height:13.1px;background:rgb(255,255,255)"></div>
<div class="abs" style="left:1141.7px;top:541.9px;width:13.1px;height:13.1px;background:rgb(218,218,218)"></div>
<div class="abs" style="left:1154.8px;top:541.9px;width:13.1px;height:13.1px;background:rgb(252,252,252)"></div>
<div class="abs" style="left:1167.9px;top:541.9px;width:13.1px;height:13.1px;background:rgb(238,238,238)"></div>
<div class="abs" style="left:1181.0px;top:541.9px;width:13.1px;height:13.1px;background:rgb(214,214,214)"></div>
<div class="abs" style="left:1194.1px;top:541.9px;width:13.1px;height:13.1px;background:rgb(242,242,242)"></div>
<div class="abs" style="left:1207.2px;top:541.9px;width:13.1px;height:13.1px;background:rgb(230,230,230)"></div>
<div class="abs" style="left:1220.3px;top:541.9px;width:13.1px;height:13.1px;background:rgb(217,217,217)"></div>
<div class="abs" style="left:1233.4px;top:541.9px;width:13.1px;height:13.1px;background:rgb(246,246,246)"></div>
<div class="abs" style="left:1246.5px;top:541.9px;width:13.1px;height:13.1px;background:rgb(230,230,230)"></div>
<div class="abs" style="left:1259.6px;top:541.9px;width:13.1px;height:13.1px;background:rgb(220,220,220)"></div>
<div class="abs" style="left:1272.7px;top:541.9px;width:13.1px;height:13.1px;background:rgb(250,250,250)"></div>
<div class="abs" style="left:1285.8px;top:541.9px;width:13.1px;height:13.1px;background:rgb(230,230,230)"></div>
<div class="abs" style="left:1102.4px;top:555.0px;width:13.1px;height:13.1px;background:rgb(242,242,242)"></div>
<div class="abs" style="left:1115.5px;top:555.0px;width:13.1px;height:13.1px;background:rgb(255,255,255)"></div>
<div class="abs" style="left:1128.6px;top:555.0px;width:13.1px;height:13.1px;background:rgb(250,250,250)"></div>
<div class="abs" style="left:1141.7px;top:555.0px;width:13.1px;height:13.1px;background:rgb(234,234,234)"></div>
<div class="abs" style="left:1154.8px;top:555.0px;width:13.1px;height:13.1px;background:rgb(255,255,255)"></div>
<div class="abs" style="left:1167.9px;top:555.0px;width:13.1px;height:13.1px;background:rgb(250,250,250)"></div>
<div class="abs" style="left:1181.0px;top:555.0px;width:13.1px;height:13.1px;background:rgb(240,240,240)"></div>
<div class="abs" style="left:1194.1px;top:555.0px;width:13.1px;height:13.1px;background:rgb(218,218,218)"></div>
<div class="abs" style="left:1207.2px;top:555.0px;width:13.1px;height:13.1px;background:rgb(242,242,242)"></div>
<div class="abs" style="left:1220.3px;top:555.0px;width:13.1px;height:13.1px;background:rgb(234,234,234)"></div>
<div class="abs" style="left:1233.4px;top:555.0px;width:13.1px;height:13.1px;background:rgb(240,240,240)"></div>
<div class="abs" style="left:1246.5px;top:555.0px;width:13.1px;height:13.1px;background:rgb(244,244,244)"></div>
<div class="abs" style="left:1259.6px;top:555.0px;width:13.1px;height:13.1px;background:rgb(230,230,230)"></div>
<div class="abs" style="left:1181.0px;top:568.1px;width:13.1px;height:13.1px;background:rgb(251,251,251)"></div>
<div class="abs" style="left:1194.1px;top:568.1px;width:13.1px;height:13.1px;background:rgb(232,232,232)"></div>
<div class="abs" style="left:1246.5px;top:568.1px;width:13.1px;height:13.1px;background:rgb(218,218,218)"></div>
<div class="abs" style="left:1259.6px;top:568.1px;width:13.1px;height:13.1px;background:rgb(251,251,251)"></div>
<div class="abs" style="left:1144.8px;top:608px;width:93px;height:22.5px;border:1px solid #e4e6e9;border-radius:3px;background:#fff"></div>
<div class="abs" style="left:1175.9px;top:609px;width:30.8px;height:20.5px;background:#f5f6f8;box-shadow:inset 0 2px 2px rgba(0,0,0,0.05)"></div>
<div class="abs" style="left:1174.9px;top:609px;width:1px;height:20.5px;background:#e7e9ec"></div>
<div class="abs" style="left:1206.7px;top:609px;width:1px;height:20.5px;background:#e7e9ec"></div>
<svg class="abs" style="left:1155.0px;top:615.0px" width="11" height="8" viewBox="0 0 11 8"><g fill="#4a4a4a" shape-rendering="crispEdges"><rect x="0" y="0" width="1" height="1"/><rect x="2" y="0" width="8.5" height="1"/><rect x="0" y="2" width="1" height="1"/><rect x="2" y="2" width="8.5" height="1"/><rect x="0" y="4" width="1" height="1"/><rect x="2" y="4" width="8.5" height="1"/><rect x="0" y="6" width="1" height="1"/><rect x="2" y="6" width="8.5" height="1"/></g><g fill="#4a4a4a" opacity="0.45" shape-rendering="crispEdges"><rect x="2" y="1" width="8.5" height="1"/><rect x="2" y="3" width="8.5" height="1"/><rect x="2" y="5" width="8.5" height="1"/><rect x="2" y="7" width="8.5" height="1"/></g></svg>
<svg class="abs" style="left:1186.0px;top:615.0px" width="12" height="9" viewBox="0 0 12 9"><g shape-rendering="crispEdges"><rect x="0" y="0" width="1" height="9" fill="#8a8a8a"/><rect x="0" y="8" width="11.5" height="1" fill="#9a9a9a"/><g fill="#4d4d4d"><rect x="2" y="5" width="1" height="3"/><rect x="4" y="2" width="1" height="6"/><rect x="6" y="4" width="1" height="4"/><rect x="8" y="1" width="1" height="7"/></g></g></svg>
<svg class="abs" style="left:1217.3px;top:613.7px" width="10" height="10" viewBox="0 0 10 10"><path d="M4.4 0.8 A4.3 4.3 0 1 0 9 5.6 L4.4 5.6 Z" fill="#474747"/><path d="M5.4 0 A4.3 4.3 0 0 1 9.6 4.2 L5.4 4.2 Z" fill="#474747"/><path d="M6 5 L9.6 5 A4.3 4.3 0 0 1 8.4 7.8 Z" fill="#474747"/></svg>
<div class="ctitle" style="left:436px;top:660px">Топ по количеству запросов : IP-адрес</div>
<div class="csub" style="left:436px;top:675.5px">Статистика по БД</div>
<svg class="abs" style="left:702px;top:665px" width="8" height="8" viewBox="0 0 8 8"><path d="M1 1 L7 7 M7 1 L1 7" stroke="#5d6168" stroke-width="2.2"/></svg>
<div class="abs" style="left:431px;top:693.5px;width:287px;height:1px;background:#eef0f2"></div>
<div class="abs" style="left:443.0px;top:695.2px;width:13.1px;height:13.1px;background:rgb(226,226,229)"></div>
<div class="abs" style="left:456.1px;top:695.2px;width:13.1px;height:13.1px;background:rgb(232,232,235)"></div>
<div class="abs" style="left:469.2px;top:695.2px;width:13.1px;height:13.1px;background:rgb(230,230,233)"></div>
<div class="abs" style="left:482.3px;top:695.2px;width:13.1px;height:13.1px;background:rgb(230,230,233)"></div>
<div class="abs" style="left:495.4px;top:695.2px;width:13.1px;height:13.1px;background:rgb(228,228,231)"></div>
<div class="abs" style="left:508.5px;top:695.2px;width:10px;height:13.1px;background:rgb(240,240,243)"></div>
<div class="abs" style="left:443.0px;top:708.3px;width:13.1px;height:13.1px;background:rgb(232,232,235)"></div>
<div class="abs" style="left:456.1px;top:708.3px;width:13.1px;height:13.1px;background:rgb(236,236,239)"></div>
<div class="abs" style="left:469.2px;top:708.3px;width:13.1px;height:13.1px;background:rgb(234,234,237)"></div>
<div class="abs" style="left:482.3px;top:708.3px;width:13.1px;height:13.1px;background:rgb(232,232,235)"></div>
<div class="abs" style="left:495.4px;top:708.3px;width:13.1px;height:13.1px;background:rgb(242,242,245)"></div>
<div class="abs" style="left:508.5px;top:708.3px;width:10px;height:13.1px;background:rgb(248,248,251)"></div>
<div class="abs" style="left:443.0px;top:721.4px;width:13.1px;height:13.1px;background:rgb(242,242,245)"></div>
<div class="abs" style="left:456.1px;top:721.4px;width:13.1px;height:13.1px;background:rgb(246,246,249)"></div>
<div class="abs" style="left:469.2px;top:721.4px;width:13.1px;height:13.1px;background:rgb(242,242,245)"></div>
<div class="abs" style="left:482.3px;top:721.4px;width:13.1px;height:13.1px;background:rgb(242,242,245)"></div>
<div class="abs" style="left:495.4px;top:721.4px;width:13.1px;height:13.1px;background:rgb(246,246,249)"></div>
<div class="abs" style="left:508.5px;top:721.4px;width:10px;height:13.1px;background:rgb(250,250,253)"></div>
<div class="abs" style="left:443.0px;top:734.5px;width:13.1px;height:13.1px;background:rgb(226,226,229)"></div>
<div class="abs" style="left:456.1px;top:734.5px;width:13.1px;height:13.1px;background:rgb(230,230,233)"></div>
<div class="abs" style="left:469.2px;top:734.5px;width:13.1px;height:13.1px;background:rgb(228,228,231)"></div>
<div class="abs" style="left:482.3px;top:734.5px;width:13.1px;height:13.1px;background:rgb(224,224,227)"></div>
<div class="abs" style="left:495.4px;top:734.5px;width:13.1px;height:13.1px;background:rgb(238,238,241)"></div>
<div class="abs" style="left:508.5px;top:734.5px;width:10px;height:13.1px;background:rgb(250,250,253)"></div>
<div class="abs" style="left:443.0px;top:747.6px;width:13.1px;height:13.1px;background:rgb(226,226,229)"></div>
<div class="abs" style="left:456.1px;top:747.6px;width:13.1px;height:13.1px;background:rgb(230,230,233)"></div>
<div class="abs" style="left:469.2px;top:747.6px;width:13.1px;height:13.1px;background:rgb(228,228,231)"></div>
<div class="abs" style="left:482.3px;top:747.6px;width:13.1px;height:13.1px;background:rgb(228,228,231)"></div>
<div class="abs" style="left:495.4px;top:747.6px;width:13.1px;height:13.1px;background:rgb(226,226,229)"></div>
<div class="abs" style="left:508.5px;top:747.6px;width:10px;height:13.1px;background:rgb(240,240,243)"></div>
<div class="abs" style="left:443.0px;top:760.7px;width:13.1px;height:13.1px;background:rgb(240,240,243)"></div>
<div class="abs" style="left:456.1px;top:760.7px;width:13.1px;height:13.1px;background:rgb(242,242,245)"></div>
<div class="abs" style="left:469.2px;top:760.7px;width:13.1px;height:13.1px;background:rgb(240,240,243)"></div>
<div class="abs" style="left:482.3px;top:760.7px;width:13.1px;height:13.1px;background:rgb(238,238,241)"></div>
<div class="abs" style="left:495.4px;top:760.7px;width:13.1px;height:13.1px;background:rgb(244,244,247)"></div>
<div class="abs" style="left:508.5px;top:760.7px;width:10px;height:13.1px;background:rgb(250,250,253)"></div>
<div class="abs" style="left:443.0px;top:773.8px;width:13.1px;height:13.1px;background:rgb(240,240,243)"></div>
<div class="abs" style="left:456.1px;top:773.8px;width:13.1px;height:13.1px;background:rgb(244,244,247)"></div>
<div class="abs" style="left:469.2px;top:773.8px;width:13.1px;height:13.1px;background:rgb(240,240,243)"></div>
<div class="abs" style="left:482.3px;top:773.8px;width:13.1px;height:13.1px;background:rgb(238,238,241)"></div>
<div class="abs" style="left:495.4px;top:773.8px;width:13.1px;height:13.1px;background:rgb(244,244,247)"></div>
<div class="abs" style="left:508.5px;top:773.8px;width:10px;height:13.1px;background:rgb(250,250,253)"></div>
<div class="abs" style="left:443.0px;top:786.9px;width:13.1px;height:13.1px;background:rgb(230,230,233)"></div>
<div class="abs" style="left:456.1px;top:786.9px;width:13.1px;height:13.1px;background:rgb(230,230,233)"></div>
<div class="abs" style="left:469.2px;top:786.9px;width:13.1px;height:13.1px;background:rgb(230,230,233)"></div>
<div class="abs" style="left:482.3px;top:786.9px;width:13.1px;height:13.1px;background:rgb(230,230,233)"></div>
<div class="abs" style="left:495.4px;top:786.9px;width:13.1px;height:13.1px;background:rgb(236,236,239)"></div>
<div class="abs" style="left:508.5px;top:786.9px;width:10px;height:13.1px;background:rgb(250,250,253)"></div>
<div class="tval" style="left:536.3px;top:695.8px">771 тыс.</div>
<div class="track" style="left:632px;top:695.8px"><div class="fill" style="width:15px"></div></div>
<div class="abs" style="left:442px;top:699.8px;width:1.2px;height:1.2px;background:#e8925a"></div>
<div class="abs" style="left:431px;top:711.8299999999999px;width:95px;height:1px;background:#eef0f2"></div>
<div class="abs" style="left:527px;top:711.8299999999999px;width:95px;height:1px;background:#eef0f2"></div>
<div class="abs" style="left:623px;top:711.8299999999999px;width:95px;height:1px;background:#eef0f2"></div>
<div class="tval" style="left:536.3px;top:713.8px">697 тыс.</div>
<div class="track" style="left:632px;top:713.8px"><div class="fill" style="width:14px"></div></div>
<div class="abs" style="left:442px;top:717.8px;width:1.2px;height:1.2px;background:#e8925a"></div>
<div class="abs" style="left:431px;top:729.8599999999999px;width:95px;height:1px;background:#eef0f2"></div>
<div class="abs" style="left:527px;top:729.8599999999999px;width:95px;height:1px;background:#eef0f2"></div>
<div class="abs" style="left:623px;top:729.8599999999999px;width:95px;height:1px;background:#eef0f2"></div>
<div class="tval" style="left:536.3px;top:731.9px">671 тыс.</div>
<div class="track" style="left:632px;top:731.9px"><div class="fill" style="width:13px"></div></div>
<div class="abs" style="left:442px;top:735.9px;width:1.2px;height:1.2px;background:#e8925a"></div>
<div class="abs" style="left:431px;top:747.89px;width:95px;height:1px;background:#eef0f2"></div>
<div class="abs" style="left:527px;top:747.89px;width:95px;height:1px;background:#eef0f2"></div>
<div class="abs" style="left:623px;top:747.89px;width:95px;height:1px;background:#eef0f2"></div>
<div class="tval" style="left:536.3px;top:749.9px">533 тыс.</div>
<div class="track" style="left:632px;top:749.9px"><div class="fill" style="width:11px"></div></div>
<div class="abs" style="left:442px;top:753.9px;width:1.2px;height:1.2px;background:#e8925a"></div>
<div class="abs" style="left:431px;top:765.92px;width:95px;height:1px;background:#eef0f2"></div>
<div class="abs" style="left:527px;top:765.92px;width:95px;height:1px;background:#eef0f2"></div>
<div class="abs" style="left:623px;top:765.92px;width:95px;height:1px;background:#eef0f2"></div>
<div class="tval" style="left:536.3px;top:767.9px">326 тыс.</div>
<div class="track" style="left:632px;top:767.9px"><div class="fill" style="width:7px"></div></div>
<div class="abs" style="left:442px;top:771.9px;width:1.2px;height:1.2px;background:#e8925a"></div>
<div class="abs" style="left:431px;top:783.9499999999999px;width:95px;height:1px;background:#eef0f2"></div>
<div class="abs" style="left:527px;top:783.9499999999999px;width:95px;height:1px;background:#eef0f2"></div>
<div class="abs" style="left:623px;top:783.9499999999999px;width:95px;height:1px;background:#eef0f2"></div>
<div class="tval" style="left:536.3px;top:785.9px">300 тыс.</div>
<div class="track" style="left:632px;top:785.9px"><div class="fill" style="width:6px"></div></div>
<div class="abs" style="left:442px;top:789.9px;width:1.2px;height:1.2px;background:#e8925a"></div>
<div class="ctitle" style="left:747px;top:660px">Объем данных и количество объектов</div>
<div class="csub" style="left:747px;top:675.5px">Другая статистика</div>
<svg class="abs" style="left:1324px;top:665px" width="8" height="8" viewBox="0 0 8 8"><path d="M1 1 L7 7 M7 1 L1 7" stroke="#5d6168" stroke-width="2.2"/></svg>
<div class="abs" style="left:742px;top:693.5px;width:598px;height:1px;background:#eef0f2"></div>
<div class="abs" style="left:1105.2px;top:701.7px;width:9.5px;height:9.5px;border-radius:50%;background:#2e7ec1"></div>
<div class="abs" style="left:1117px;top:700px;font-size:9.9px;line-height:13px;color:#333">Объем данных (левая ось)</div>
<div class="abs" style="left:1105.2px;top:717.9px;width:9.5px;height:9.5px;border-radius:50%;background:#fd8421"></div>
<div class="abs" style="left:1117px;top:716.2px;font-size:9.9px;line-height:13px;color:#333">Количество объектов (правая ось)</div>
<svg class="abs" style="left:738px;top:655px" width="607" height="138"><line x1="62" y1="82.5" x2="552.5999999999999" y2="82.5" stroke="#e8e8e8" stroke-width="1"/><line x1="62" y1="105.60000000000002" x2="552.5999999999999" y2="105.60000000000002" stroke="#e8e8e8" stroke-width="1"/><line x1="62" y1="128.70000000000005" x2="552.5999999999999" y2="128.70000000000005" stroke="#e8e8e8" stroke-width="1"/><line x1="139.39999999999998" y1="80" x2="139.39999999999998" y2="138" stroke="#e8e8e8" stroke-width="1"/><line x1="215.60000000000002" y1="80" x2="215.60000000000002" y2="138" stroke="#e8e8e8" stroke-width="1"/><line x1="291.79999999999995" y1="80" x2="291.79999999999995" y2="138" stroke="#e8e8e8" stroke-width="1"/><line x1="368.70000000000005" y1="80" x2="368.70000000000005" y2="138" stroke="#e8e8e8" stroke-width="1"/><line x1="445.5999999999999" y1="80" x2="445.5999999999999" y2="138" stroke="#e8e8e8" stroke-width="1"/><line x1="522.5999999999999" y1="80" x2="522.5999999999999" y2="138" stroke="#e8e8e8" stroke-width="1"/><rect x="68.20" y="80.20" width="3.8" height="57.80" fill="#5f9fd3" stroke="#8dbbe2" stroke-width="0.4"/><rect x="72.10" y="90.20" width="3.8" height="47.80" fill="#5f9fd3" stroke="#8dbbe2" stroke-width="0.4"/><rect x="75.80" y="99.70" width="3.8" height="38.30" fill="#5f9fd3" stroke="#8dbbe2" stroke-width="0.4"/><rect x="79.50" y="112.30" width="3.8" height="25.70" fill="#5f9fd3" stroke="#8dbbe2" stroke-width="0.4"/><rect x="83.10" y="134.00" width="3.8" height="4.00" fill="#5f9fd3" stroke="#8dbbe2" stroke-width="0.4"/><polyline points="117,138 119.89999999999998,80.5 123,138" fill="none" stroke="#f98d2b" stroke-width="1.4"/><polyline points="130.20000000000005,138 131.20000000000005,129.5 132.20000000000005,138" fill="none" stroke="#f98d2b" stroke-width="1.2"/><line x1="62" y1="80" x2="62" y2="138" stroke="#999" stroke-width="1.2"/><line x1="552.5999999999999" y1="80" x2="552.5999999999999" y2="138" stroke="#333" stroke-width="1"/></svg>
<div class="ylab" style="left:740px;top:729.0px;width:57.1px;font-size:9.8px;line-height:13px">668 МБ</div>
<div class="ylab" style="left:740px;top:752.3px;width:57.1px;font-size:9.8px;line-height:13px">572 МБ</div>
<div class="ylab" style="left:740px;top:775.5px;width:57.1px;font-size:9.8px;line-height:13px">477 МБ</div>
<div class="abs" style="left:1293.5px;top:737.7px;font-size:10px;line-height:13px;color:#333">600,000</div>
<div class="abs" style="left:1293.5px;top:763.0px;font-size:10px;line-height:13px;color:#333">500,000</div>
<!-- /CARDS -->
<div id="rb" class="abs"></div>
<div id="bb" class="abs"></div>
</body></html>
